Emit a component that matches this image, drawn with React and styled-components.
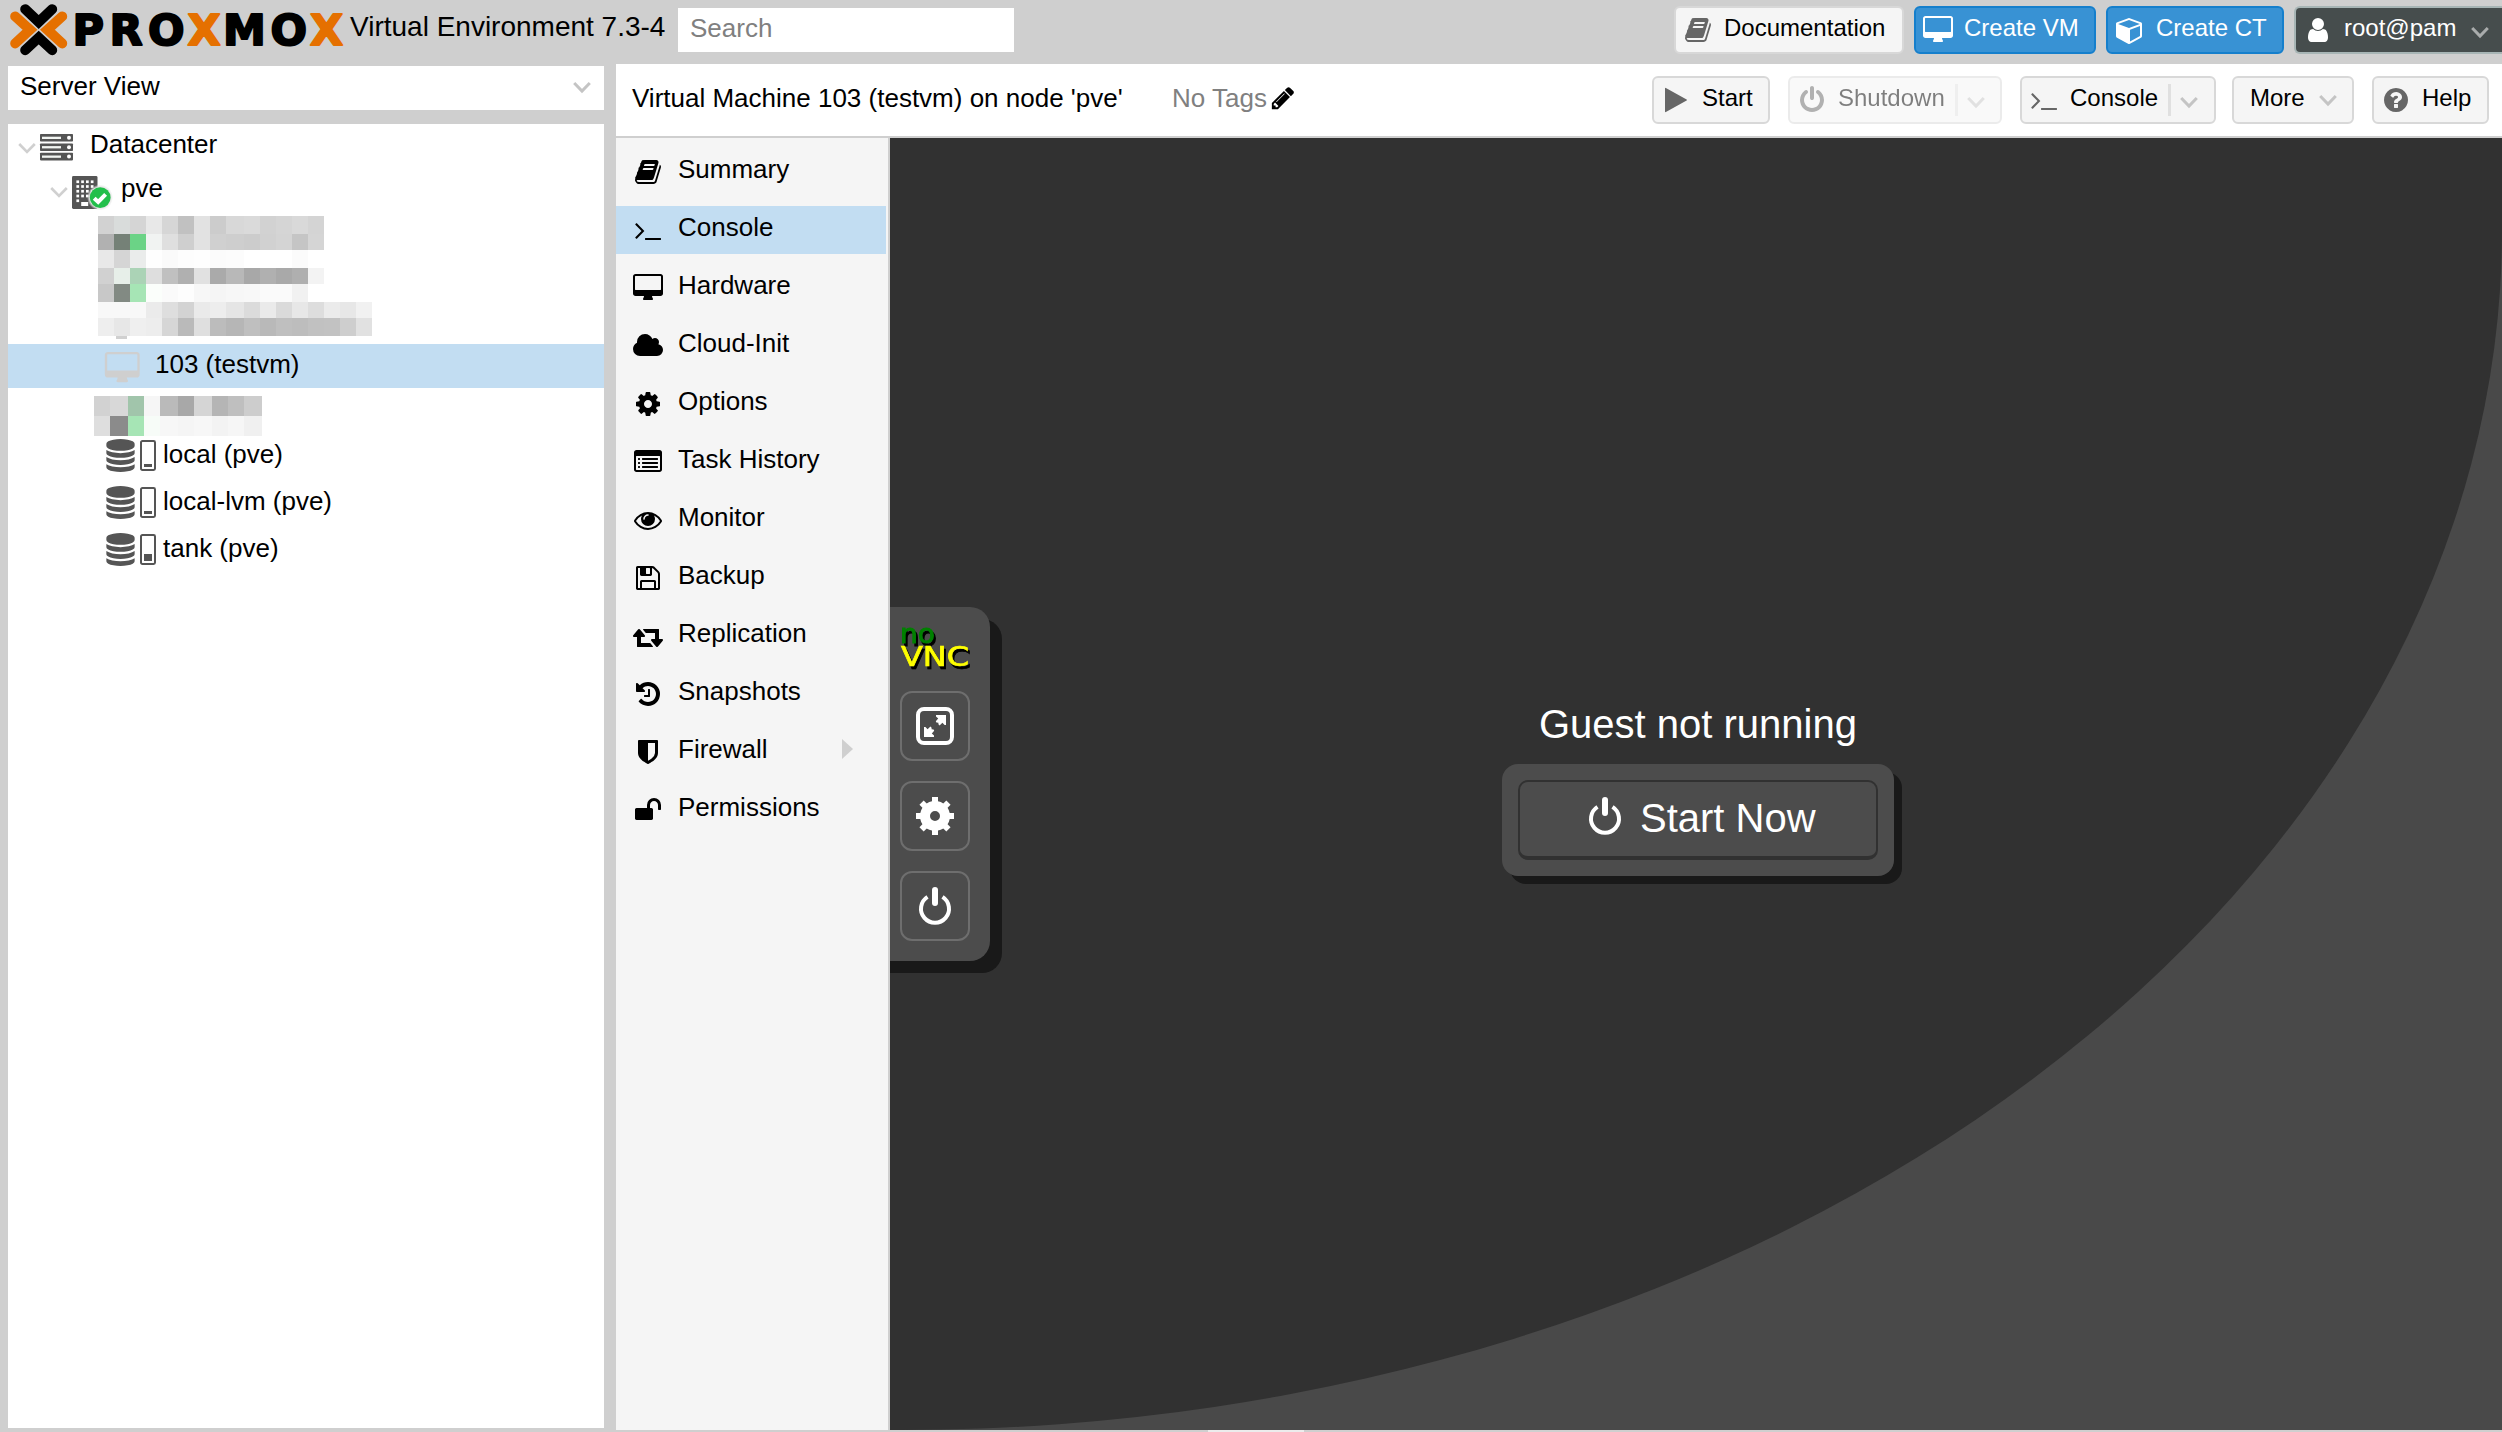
import React from 'react';
import styled, { createGlobalStyle, css } from 'styled-components';

const GlobalStyle = createGlobalStyle`
  * { box-sizing: border-box; }
  html, body, #root { height: 100%; }
  body {
    margin: 0;
    overflow: hidden;
    background: #cfcfcf;
    color: #000;
    font-family: "Liberation Sans", Arial, Helvetica, sans-serif;
    font-size: 26px;
  }
`;

/* ---------- icons ---------- */

const ICONS = {
  book: 'M1703 478q40 57 18 129l-275 906q-19 64-76.5 107.5t-122.5 43.5h-923q-77 0-148.5-53.5t-99.5-131.5q-24-67-2-127 0-4 3-27t4-37q1-8-3-21.5t-3-19.5q2-11 8-21t16.5-23.5 16.5-23.5q23-38 45-91.5t30-91.5q3-10 .5-30t-.5-28q3-11 17-28t17-23q21-36 42-92t25-90q1-9-2.5-32t.5-28q4-13 22-30.5t22-22.5q19-26 42.5-84.5t27.5-96.5q1-8-3-25.5t-2-26.5q2-8 9-18t18-23 17-21q8-12 16.5-30.5t15-35 16-36 19.5-32 26.5-23.5 36-11.5 47.5 5.5l-1 3q38-9 51-9h761q74 0 114 56t18 130l-274 906q-36 119-71.5 153.5t-128.5 34.5h-869q-27 0-38 15-11 16-1 43 24 70 144 70h923q29 0 56-15.5t35-41.5l300-987q7-22 5-57 38 15 59 43zm-1064 2q-4 13 2 22.5t20 9.5h608q13 0 25.5-9.5t16.5-22.5l21-64q4-13-2-22.5t-20-9.5h-608q-13 0-25.5 9.5t-16.5 22.5zm-83 256q-4 13 2 22.5t20 9.5h608q13 0 25.5-9.5t16.5-22.5l21-64q4-13-2-22.5t-20-9.5h-608q-13 0-25.5 9.5t-16.5 22.5z',
  terminal: 'M649 983l-466 466q-10 10-23 10t-23-10l-50-50q-10-10-10-23t10-23l393-393-393-393q-10-10-10-23t10-23l50-50q10-10 23-10t23 10l466 466q10 10 10 23t-10 23zm1079 457v64q0 14-9 23t-23 9h-960q-14 0-23-9t-9-23v-64q0-14 9-23t23-9h960q14 0 23 9t9 23z',
  desktop: 'M1728 992v-832q0-13-9.5-22.5t-22.5-9.5h-1600q-13 0-22.5 9.5t-9.5 22.5v832q0 13 9.5 22.5t22.5 9.5h1600q13 0 22.5-9.5t9.5-22.5zm128-832v1088q0 66-47 113t-113 47h-544q0 37 16 77.5t32 71 16 43.5q0 26-19 45t-45 19h-512q-26 0-45-19t-19-45q0-14 16-44t32-70 16-78h-544q-66 0-113-47t-47-113v-1088q0-66 47-113t113-47h1600q66 0 113 47t47 113z',
  cloud: 'M1856 1152q0 159-112.5 271.5t-271.5 112.5h-1088q-185 0-316.5-131.5t-131.5-316.5q0-132 71-241.5t187-163.5q-2-28-2-43 0-212 150-362t362-150q158 0 286.5 88t187.5 230q70-62 166-62 106 0 181 75t75 181q0 75-41 138 129 30 213 134.5t84 239.5z',
  cog: 'M1152 896q0-106-75-181t-181-75-181 75-75 181 75 181 181 75 181-75 75-181zm512-109v222q0 12-8 23t-20 13l-185 28q-19 54-39 91 35 50 107 138 10 12 10 25t-9 23q-27 37-99 108t-94 71q-12 0-26-9l-138-108q-44 23-91 38-16 136-29 186-7 28-36 28h-222q-14 0-24.5-8.5t-11.5-21.5l-28-184q-49-16-90-37l-141 107q-10 9-25 9-14 0-25-11-126-114-165-168-7-10-7-23 0-12 8-23 15-21 51-66.5t54-70.5q-27-50-41-99l-183-27q-13-2-21-12.5t-8-23.5v-222q0-12 8-23t19-13l186-28q14-46 39-92-40-57-107-138-10-12-10-24 0-10 9-23 26-36 98.5-107.5t94.5-71.5q13 0 26 10l138 107q44-23 91-38 16-136 29-186 7-28 36-28h222q14 0 24.5 8.5t11.5 21.5l28 184q49 16 90 37l142-107q9-9 24-9 13 0 25 10 129 119 165 170 7 8 7 22 0 12-8 23-15 21-51 66.5t-54 70.5q26 50 41 98l183 28q13 2 21 12.5t8 23.5z',
  list: 'M384 1184v64q0 13-9.5 22.5t-22.5 9.5h-64q-13 0-22.5-9.5t-9.5-22.5v-64q0-13 9.5-22.5t22.5-9.5h64q13 0 22.5 9.5t9.5 22.5zm0-256v64q0 13-9.5 22.5t-22.5 9.5h-64q-13 0-22.5-9.5t-9.5-22.5v-64q0-13 9.5-22.5t22.5-9.5h64q13 0 22.5 9.5t9.5 22.5zm0-256v64q0 13-9.5 22.5t-22.5 9.5h-64q-13 0-22.5-9.5t-9.5-22.5v-64q0-13 9.5-22.5t22.5-9.5h64q13 0 22.5 9.5t9.5 22.5zm1152 512v64q0 13-9.5 22.5t-22.5 9.5h-960q-13 0-22.5-9.5t-9.5-22.5v-64q0-13 9.5-22.5t22.5-9.5h960q13 0 22.5 9.5t9.5 22.5zm0-256v64q0 13-9.5 22.5t-22.5 9.5h-960q-13 0-22.5-9.5t-9.5-22.5v-64q0-13 9.5-22.5t22.5-9.5h960q13 0 22.5 9.5t9.5 22.5zm0-256v64q0 13-9.5 22.5t-22.5 9.5h-960q-13 0-22.5-9.5t-9.5-22.5v-64q0-13 9.5-22.5t22.5-9.5h960q13 0 22.5 9.5t9.5 22.5zm128 704v-832q0-13-9.5-22.5t-22.5-9.5h-1472q-13 0-22.5 9.5t-9.5 22.5v832q0 13 9.5 22.5t22.5 9.5h1472q13 0 22.5-9.5t9.5-22.5zm128-1088v1088q0 66-47 113t-113 47h-1472q-66 0-113-47t-47-113v-1088q0-66 47-113t113-47h1472q66 0 113 47t47 113z',
  eye: 'M1664 960q-152-236-381-353 61 104 61 225 0 185-131.5 316.5t-316.5 131.5-316.5-131.5-131.5-316.5q0-121 61-225-229 117-381 353 133 205 333.5 326.5t434.5 121.5 434.5-121.5 333.5-326.5zm-720-384q0-20-14-34t-34-14q-125 0-214.5 89.5t-89.5 214.5q0 20 14 34t34 14 34-14 14-34q0-86 61-147t147-61q20 0 34-14t14-34zm848 384q0 34-20 69-140 230-376.5 368.5t-499.5 138.5-499.5-139-376.5-368q-20-35-20-69t20-69q140-229 376.5-368t499.5-139 499.5 139 376.5 368q20 35 20 69z',
  floppy: 'M512 1536h768v-384h-768v384zm896 0h128v-896q0-14-10-38.5t-20-34.5l-281-281q-10-10-34-20t-39-10v416q0 40-28 68t-68 28h-576q-40 0-68-28t-28-68v-416h-128v1280h128v-416q0-40 28-68t68-28h832q40 0 68 28t28 68v416zm-384-928v-320q0-13-9.5-22.5t-22.5-9.5h-192q-13 0-22.5 9.5t-9.5 22.5v320q0 13 9.5 22.5t22.5 9.5h192q13 0 22.5-9.5t9.5-22.5zm640 32v928q0 40-28 68t-68 28h-1344q-40 0-68-28t-28-68v-1344q0-40 28-68t68-28h928q40 0 88 20t76 48l280 280q28 28 48 76t20 88z',
  retweet: 'M1216 1568q0 13-9.5 22.5t-22.5 9.5h-960q-8 0-13.5-2t-9-7-5.5-8-3-11.5-1-11.5v-600h-192q-26 0-45-19t-19-45q0-24 15-41l320-384q19-22 49-22t49 22l320 384q15 17 15 41 0 26-19 45t-45 19h-192v384h576q16 0 25 11l160 192q7 10 7 21zm640-416q0 24-15 41l-320 384q-20 23-49 23t-49-23l-320-384q-15-17-15-41 0-26 19-45t45-19h192v-384h-576q-16 0-25-12l-160-192q-7-9-7-20 0-13 9.5-22.5t22.5-9.5h960q8 0 13.5 2t9 7 5.5 8 3 11.5 1 11.5v600h192q26 0 45 19t19 45z',
  history: 'M1664 896q0 156-61 298t-164 245-245 164-298 61q-172 0-327-72.5t-264-204.5q-7-10-6.5-22.5t8.5-20.5l137-138q10-9 25-9 16 2 23 12 73 95 179 147t225 52q104 0 198.5-40.5t163.5-109.5 109.5-163.5 40.5-198.5-40.5-198.5-109.5-163.5-163.5-109.5-198.5-40.5q-98 0-188 35.5t-160 101.5l137 138q31 30 14 69-17 40-59 40h-448q-26 0-45-19t-19-45v-448q0-42 40-59 39-17 69 14l130 129q107-101 244.5-156.5t284.5-55.5q156 0 298 61t245 164 164 245 61 298zm-640-288v448q0 14-9 23t-23 9h-320q-14 0-23-9t-9-23v-64q0-14 9-23t23-9h224v-352q0-14 9-23t23-9h64q14 0 23 9t9 23z',
  shield: 'M1344 960v-640h-448v1137q119-63 213-137 235-184 235-360zm192-768v768q0 86-33.5 170.5t-83 150-118 127.5-126.5 103-121 77.5-89.5 49.5-42.5 20q-12 6-26 6t-26-6q-16-7-42.5-20t-89.5-49.5-121-77.5-126.5-103-118-127.5-83-150-33.5-170.5v-768q0-26 19-45t45-19h1152q26 0 45 19t19 45z',
  unlock: 'M1728 576v256q0 26-19 45t-45 19h-64q-26 0-45-19t-19-45v-256q0-106-75-181t-181-75-181 75-75 181v192h96q40 0 68 28t28 68v576q0 40-28 68t-68 28h-960q-40 0-68-28t-28-68v-576q0-40 28-68t68-28h672v-192q0-185 131.5-316.5t316.5-131.5 316.5 131.5 131.5 316.5z',
  play: 'M1576 927l-1328 738q-23 13-39.5 3t-16.5-36v-1472q0-26 16.5-36t39.5 3l1328 738q23 13 23 31t-23 31z',
  power: 'M1664 896q0 156-61 298t-164 245-245 164-298 61-298-61-245-164-164-245-61-298q0-182 80.5-343t226.5-270q43-32 95.5-25t83.5 50q32 42 24.5 94.5t-49.5 84.5q-98 74-151.5 181t-53.5 228q0 104 40.5 198.5t109.5 163.5 163.5 109.5 198.5 40.5 198.5-40.5 163.5-109.5 109.5-163.5 40.5-198.5q0-121-53.5-228t-151.5-181q-42-32-49.5-84.5t24.5-94.5q31-43 84-50t95 25q146 109 226.5 270t80.5 343zm-640-768v640q0 52-38 90t-90 38-90-38-38-90v-640q0-52 38-90t90-38 90 38 38 90z',
  question: 'M1024 1376v-192q0-14-9-23t-23-9h-192q-14 0-23 9t-9 23v192q0 14 9 23t23 9h192q14 0 23-9t9-23zm256-672q0-88-55.5-163t-138.5-116-170-41q-243 0-371 213-15 24 8 42l132 100q7 6 19 6 16 0 25-12 53-68 86-92 34-24 86-24 48 0 85.5 26t37.5 59q0 38-20 61t-68 45q-63 28-115.5 86.5t-52.5 125.5v36q0 14 9 23t23 9h192q14 0 23-9t9-23q0-19 21.5-49.5t54.5-49.5q32-18 49-28.5t46-35 44.5-48 28-60.5 12.5-81zm384 192q0 209-103 385.5t-279.5 279.5-385.5 103-385.5-103-279.5-279.5-103-385.5 103-385.5 279.5-279.5 385.5-103 385.5 103 279.5 279.5 103 385.5z',
  pencil: 'M491 1536l91-91-235-235-91 91v107h128v128h107zm523-928q0-22-22-22-10 0-17 7l-542 542q-7 7-7 17 0 22 22 22 10 0 17-7l542-542q7-7 7-17zm-54-192l416 416-832 832h-416v-416zm683 96q0 53-37 90l-166 166-416-416 166-165q36-38 90-38 53 0 91 38l235 234q37 39 37 91z',
  user: 'M1536 1399q0 109-62.5 187t-150.5 78h-854q-88 0-150.5-78t-62.5-187q0-85 8.5-160.5t31.5-152 58.5-131 94-89 134.5-34.5q131 128 313 128t313-128q76 0 134.5 34.5t94 89 58.5 131 31.5 152 8.5 160.5zm-256-887q0 159-112.5 271.5t-271.5 112.5-271.5-112.5-112.5-271.5 112.5-271.5 271.5-112.5 271.5 112.5 112.5 271.5z',
  cube: 'M896 1629l640-349v-636l-640 233v752zm-64-865l698-254-698-254-698 254zm832-252v768q0 35-18 65t-49 47l-704 384q-28 16-61 16t-61-16l-704-384q-31-17-49-47t-18-65v-768q0-40 23-73t61-47l704-256q22-8 44-8t44 8l704 256q38 14 61 47t23 73z',
  database: 'M896 768q237 0 443-43t325-127v170q0 69-103 128t-280 93.5-385 34.5-385-34.5-280-93.5-103-128v-170q119 84 325 127t443 43zm0 768q237 0 443-43t325-127v170q0 69-103 128t-280 93.5-385 34.5-385-34.5-280-93.5-103-128v-170q119 84 325 127t443 43zm0-384q237 0 443-43t325-127v170q0 69-103 128t-280 93.5-385 34.5-385-34.5-280-93.5-103-128v-170q119 84 325 127t443 43zm0-1152q208 0 385 34.5t280 93.5 103 128v128q0 69-103 128t-280 93.5-385 34.5-385-34.5-280-93.5-103-128v-128q0-69 103-128t280-93.5 385-34.5z',
};

const Glyph = styled.svg`
  display: block;
  flex: none;
  overflow: visible;
  fill: currentColor;
  width: ${(p) => p.$size}px;
  height: ${(p) => p.$size}px;
`;

function Icon({ name, size = 28 }) {
  return (
    <Glyph $size={size} viewBox="0 0 1792 1792" aria-hidden="true">
      <path d={ICONS[name]} />
    </Glyph>
  );
}

const ChevronSvg = styled.svg`
  display: block;
  flex: none;
  width: 18px;
  height: 11px;
  overflow: visible;
  margin-top: ${(p) => p.$top || 0}px;
  fill: none;
  stroke: ${(p) => p.$color || '#c4c4c4'};
  stroke-width: ${(p) => p.$weight || 3};
`;

function Chevron(props) {
  return (
    <ChevronSvg viewBox="0 0 18 11" {...props}>
      <path d="M1.2 1 L9 9 L16.8 1" />
    </ChevronSvg>
  );
}

/* ---------- frame ---------- */

const Page = styled.div`
  display: flex;
  flex-direction: column;
  width: 100%;
  height: 1432px;
  overflow: hidden;
  background: #cfcfcf;
`;

const Header = styled.header`
  flex: none;
  display: flex;
  align-items: flex-start;
  height: 64px;
  padding: 6px 0 0 10px;
`;

const Logo = styled.svg`
  flex: none;
  display: block;
  width: 336px;
  height: 52px;
  margin-top: -2px;
`;

const Version = styled.div`
  width: 332px;
  padding-left: 4px;
  font-size: 28px;
  line-height: 42px;
  white-space: nowrap;
`;

const SearchBox = styled.div`
  width: 336px;
  height: 44px;
  margin-top: 2px;
  padding-left: 12px;
  background: #fff;
  color: #808080;
  line-height: 41px;
`;

const HeaderActions = styled.div`
  display: flex;
  gap: 10px;
  margin-left: auto;
`;

const tones = {
  plain: css`background: #f5f5f5; border-color: #d8d8d8; color: #000;`,
  blue: css`background: #3892d4; border-color: #157fcc; color: #fff;`,
  dark: css`background: #464d4d; border-color: #a7b5b5; color: #fff; border-right: 0; border-radius: 6px 0 0 6px;`,
};

const ButtonBox = styled.button`
  flex: none;
  display: flex;
  align-items: flex-start;
  width: ${(p) => p.$width}px;
  height: 48px;
  padding: 0 0 0 ${(p) => p.$pad || 8}px;
  margin: 0 ${(p) => p.$shift || 0}px 0 0;
  border: 2px solid;
  border-radius: 6px;
  font-family: inherit;
  font-size: 24px;
  text-align: left;
  white-space: nowrap;
  ${(p) => tones[p.$tone || 'plain']}
  opacity: ${(p) => (p.$disabled ? 0.5 : 1)};
`;

const ButtonIcon = styled.span`
  width: 40px;
  padding-top: 8px;
  color: ${(p) => (p.$plain ? '#666' : '#fff')};
`;

const ButtonLabel = styled.span`
  line-height: 40px;
`;

const Divider = styled.span`
  width: 3px;
  height: 32px;
  margin: 6px 9px 0 10px;
  background: #e0e0e0;
`;

const ArrowSlot = styled.span`
  padding: ${(p) => p.$top || 19}px 0 0 ${(p) => p.$gap || 0}px;
`;

function ToolButton({ icon, label, tone = 'plain', split, arrow, arrowGap, arrowTop, ...box }) {
  return (
    <ButtonBox $tone={tone} {...box}>
      {icon && <ButtonIcon $plain={tone === 'plain'}><Icon name={icon} /></ButtonIcon>}
      <ButtonLabel>{label}</ButtonLabel>
      {split && <Divider />}
      {(split || arrow) && (
        <ArrowSlot $gap={arrowGap} $top={arrowTop}>
          <Chevron $color={tone === 'dark' ? '#a9acac' : '#c4c4c4'} />
        </ArrowSlot>
      )}
    </ButtonBox>
  );
}

const Body = styled.div`
  flex: none;
  display: grid;
  grid-template-columns: 596px 1fr;
  column-gap: 12px;
  height: 1366px;
  padding-left: 8px;
`;

/* ---------- resource tree ---------- */

const Sidebar = styled.aside`
  display: flex;
  flex-direction: column;
  gap: 14px;
  padding: 2px 0;
`;

const ViewSelect = styled.div`
  flex: none;
  display: flex;
  justify-content: space-between;
  height: 44px;
  padding: 0 13px 0 12px;
  background: #fff;
  line-height: 41px;
`;

const Tree = styled.div`
  flex: 1;
  background: #fff;
`;

const TreeRow = styled.div`
  display: flex;
  align-items: flex-start;
  height: ${(p) => p.$height || 44}px;
  padding-left: ${(p) => p.$indent}px;
  background: ${(p) => (p.$selected ? '#c2ddf2' : 'transparent')};
  line-height: ${(p) => (p.$height ? 44 : 40)}px;
  white-space: nowrap;
`;

const Expander = styled.span`
  width: 22px;
  padding-top: 19px;
`;

const NodeIcon = styled.span`
  width: ${(p) => p.$width}px;
  padding-top: ${(p) => p.$top}px;
  color: ${(p) => p.$color || '#555'};
`;

const Art = styled.svg`
  display: block;
  overflow: visible;
`;

function ServerIcon() {
  return (
    <Art width="33" height="27" viewBox="0 0 33 27">
      {[0, 9.4, 18.8].map((y) => (
        <g key={y}>
          <rect x="0" y={y} width="33" height="7.6" rx="0.8" fill="#555" />
          <rect x="2" y={y + 2.7} width="19" height="2.3" fill="#f2f5f2" />
          <circle cx="29" cy={y + 3.8} r="2" fill="#fff" />
        </g>
      ))}
    </Art>
  );
}

function NodeOnlineIcon() {
  const dots = [];
  for (let r = 0; r < 5; r += 1) {
    for (let c = 0; c < 4; c += 1) {
      if (r < 4 || c === 0) dots.push([4.4 + c * 4.8, 4.4 + r * 4.75]);
    }
  }
  return (
    <Art width="39" height="33" viewBox="0 0 39 33">
      <defs>
        <radialGradient id="halo">
          <stop offset="0.8" stopColor="#e4e4e4" />
          <stop offset="1" stopColor="#e4e4e4" stopOpacity="0" />
        </radialGradient>
      </defs>
      <rect x="0" y="0" width="25.5" height="33" rx="1.4" fill="#555" />
      {dots.map(([x, y]) => (
        <rect key={`${x}-${y}`} x={x} y={y} width="2.7" height="2.7" fill="#fff" />
      ))}
      <rect x="9.2" y="26" width="7" height="4" fill="#fff" />
      <circle cx="28" cy="21.5" r="13" fill="url(#halo)" />
      <circle cx="28.2" cy="21.6" r="10.4" fill="#22bf4b" />
      <path d="M22.2 22.2 L26.2 26 L33.6 18.4" fill="none" stroke="#fff" strokeWidth="4" />
    </Art>
  );
}

function UsageIcon({ fill }) {
  return (
    <Art width="16" height="31" viewBox="0 0 16 31">
      <rect x="1" y="1" width="14" height="29" rx="1.4" fill="#fff" stroke="#555" strokeWidth="2" />
      <rect x="4" y={27 - fill} width="8" height={fill} fill="#555" />
    </Art>
  );
}

const MosaicRow = styled.div`
  display: flex;
  height: ${(p) => p.$height}px;
  padding-left: ${(p) => p.$indent}px;
`;

const MosaicGroup = styled.div`
  height: ${(p) => p.$height}px;
  padding-top: ${(p) => p.$top}px;
`;

const Cell = styled.span`
  flex: none;
  width: ${(p) => p.$width}px;
  background: ${(p) => p.$color};
`;

const MonitorFoot = styled.div`
  width: 11px;
  height: 3px;
  margin-left: 108px;
  background: #d0d0d0;
`;

const MASK_A = {
  indent: 90,
  widths: [16, 16, 16, 16, 16, 16, 16, 16, 18, 16, 16, 16, 16, 16, 16, 16, 16],
  rows: [
    [18, '#d2d2d2 #d9dcdb #d5d5d5 #e8e8e8 #d6d6d6 #c1c1c1 #e2e2e2 #cccccc #d8d8d8 #dadada #d2d2d2 #d5d5d5 #d9d9d9 #d4d4d4'],
    [16, '#b1b1b1 #758177 #6bd386 #f1f3f2 #dfdfdf #cfcfcf #e2e2e2 #d0d0d0 #cecece #cccccc #d1d1d1 #d4d4d4 #c5c5c5 #d5d5d5'],
    [18, '#e8e8e8 #d5d5d5 #eaeceb #fefefe #fafafa #fdfdfd #fefefe #fbfbfb #fcfcfc #ffffff #ffffff #ffffff #fbfbfb #ffffff'],
    [16, '#d1d1d1 #e7efe9 #abd3b6 #dedede #c0c0c0 #b0b0b0 #e1e1e1 #aaaaaa #b8b8b8 #a8a8a8 #b0b0b0 #a9a9a9 #afafaf #f3f3f3'],
    [18, '#c8c8c8 #828a83 #a6e5b5 #fbfefb #fafafa #fdfdfd #f7f7f7 #f5f5f5 #f7f7f7 #f8f8f8 #fafafa #fafafa #f1f1f1 #ffffff'],
    [16, '#f8f8f8 #f8f8f8 #f8f8f8 #ebebeb #dedede #d3d3d3 #eaeaea #ededed #e5e5e5 #dbdbdb #eaeaea #dadada #e7e7e7 #dddddd #ebebeb #e7e7e7 #f1f1f1'],
    [18, '#eeeeee #e7e7e7 #efefef #ededed #d6d6d6 #bababa #dfdfdf #bcbcbc #b6b6b6 #bfbfbf #b9b9b9 #bfbfbf #bdbdbd #c1c1c1 #c2c2c2 #cecece #e1e1e1'],
  ],
};

const MASK_B = {
  indent: 86,
  widths: [16, 18, 16, 16, 18, 16, 18, 16, 16, 18],
  rows: [
    [20, '#d2d2d2 #d8d8d8 #a1c5ab #f6f6f6 #bababa #a8a8a8 #d5d5d5 #b5b5b5 #bfbfbf #cdcdcd'],
    [20, '#dedede #8b8b8b #a6e5b5 #f7fcf8 #f7f7f7 #f5f5f5 #f7f7f7 #f3f3f3 #f6f6f6 #f0f0f0'],
  ],
};

function Mosaic({ mask, height, top, children }) {
  return (
    <MosaicGroup $height={height} $top={top}>
      {mask.rows.map(([h, colors], r) => (
        <MosaicRow key={r} $height={h} $indent={mask.indent}>
          {colors.split(' ').map((c, i) => (
            <Cell key={i} $width={mask.widths[i]} $color={c} />
          ))}
        </MosaicRow>
      ))}
      {children}
    </MosaicGroup>
  );
}

const STORAGES = [
  { name: 'local (pve)', fill: 3 },
  { name: 'local-lvm (pve)', fill: 3 },
  { name: 'tank (pve)', fill: 7 },
];

/* ---------- content ---------- */

const Content = styled.main`
  display: flex;
  flex-direction: column;
  min-width: 0;
`;

const TitleBar = styled.div`
  flex: none;
  display: flex;
  align-items: flex-start;
  height: 74px;
  padding: 12px 13px 0 16px;
  background: #fff;
  border-bottom: 2px solid #cfcfcf;
  line-height: 44px;
  white-space: nowrap;
`;

const Title = styled.div`
  width: 540px;
`;

const Tags = styled.div`
  display: flex;
  color: #808080;
`;

const EditTags = styled.span`
  padding: 9px 0 0 3px;
  color: #000;
`;

const Toolbar = styled.div`
  display: flex;
  gap: 18px;
  margin-left: auto;
  line-height: 40px;
`;

const Workspace = styled.div`
  flex: 1;
  display: grid;
  grid-template-columns: 274px 1fr;
  min-height: 0;
`;

const Menu = styled.nav`
  display: flex;
  flex-direction: column;
  gap: 10px;
  padding: 10px 2px 0 0;
  background: #f5f5f5;
  border-right: 2px solid #cfcfcf;
`;

const MenuItem = styled.div`
  display: flex;
  align-items: flex-start;
  height: 48px;
  padding: 0 34px 0 18px;
  background: ${(p) => (p.$active ? '#c2ddf2' : 'transparent')};
  line-height: 42px;
`;

const MenuIcon = styled.span`
  width: 44px;
  padding-top: 10px;
`;

const SubmenuArrow = styled.span`
  margin: 11px -1px 0 auto;
  border-left: 11px solid #cfcfcf;
  border-top: 10px solid transparent;
  border-bottom: 10px solid transparent;
`;

const MENU = [
  ['book', 'Summary'],
  ['terminal', 'Console'],
  ['desktop', 'Hardware'],
  ['cloud', 'Cloud-Init'],
  ['cog', 'Options'],
  ['list', 'Task History'],
  ['eye', 'Monitor'],
  ['floppy', 'Backup'],
  ['retweet', 'Replication'],
  ['history', 'Snapshots'],
  ['shield', 'Firewall'],
  ['unlock', 'Permissions'],
];

const ConsoleFrame = styled.div`
  background: #494949;
  overflow: hidden;
`;

const Screen = styled.div`
  display: flex;
  height: 100%;
  background: #313131;
  border-bottom-right-radius: 1600px 1200px;
`;

const ControlBar = styled.div`
  flex: none;
  align-self: center;
  display: flex;
  flex-direction: column;
  gap: 20px;
  width: 100px;
  height: 354px;
  padding: 18px 0 0 10px;
  background: #4c4c4c;
  border-radius: 0 20px 20px 0;
  box-shadow: 12px 12px 0 #191919, 0 12px 0 #191919;
`;

const VncLogo = styled.svg`
  display: block;
  width: 74px;
  height: 46px;
  overflow: visible;
  font-family: "DejaVu Sans", sans-serif;
  filter: drop-shadow(2px 3px 0 #000);
`;

const ControlButton = styled.button`
  display: flex;
  align-items: center;
  justify-content: center;
  width: 70px;
  height: 70px;
  padding: 0;
  border: 2px solid #6e6e6e;
  border-radius: 12px;
  background: transparent;
`;

const Dialog = styled.div`
  flex: 1;
  display: flex;
  flex-direction: column;
  align-items: center;
  gap: 17px;
  padding: 563px 96px 0 0;
`;

const DialogText = styled.div`
  color: #fff;
  font-size: 40px;
  line-height: 46px;
`;

const DialogBox = styled.div`
  width: 392px;
  height: 112px;
  padding: 16px;
  background: #4c4c4c;
  border-radius: 16px;
  box-shadow: 8px 8px 0 #191919;
`;

const StartButton = styled.button`
  display: flex;
  align-items: flex-start;
  gap: 16px;
  width: 360px;
  height: 80px;
  padding: 15px 0 0 66px;
  border: 2px solid #313131;
  border-bottom-width: 4px;
  border-radius: 10px;
  background: transparent;
  color: #fff;
  font-family: inherit;
  font-size: 40px;
  line-height: 43px;
  white-space: nowrap;
`;

const StatusStrip = styled.footer`
  flex: none;
  height: 2px;
  padding-left: 1208px;
`;

const StripHandle = styled.div`
  width: 96px;
  height: 2px;
  background: #ececec;
`;

function PowerSymbol() {
  return (
    <Art width="38" height="38" viewBox="0 0 38 38">
      <path d="M11.5 9.9 A14 14 0 1 0 26.5 9.9" fill="none" stroke="#fff" strokeWidth="4" />
      <rect x="16" y="0" width="6" height="19" rx="3" fill="#fff" />
    </Art>
  );
}

function GearSymbol() {
  return (
    <Art width="38" height="38" viewBox="-19 -19 38 38" fill="#fff">
      <circle r="10" fill="none" stroke="#fff" strokeWidth="10" />
      {[0, 45, 90, 135, 180, 225, 270, 315].map((a) => (
        <rect key={a} x="-3" y="-19" width="6" height="6" transform={`rotate(${a})`} />
      ))}
    </Art>
  );
}

function ExpandSymbol() {
  const arrow = 'M20 8 H30 V18 H28.6 L26.4 15.8 L23.6 18.4 L22.4 17.2 L22.4 15.8 L20.4 15.6 L19.8 14.2 L22.2 11.6 L20 9.4 Z';
  return (
    <Art width="38" height="38" viewBox="0 0 38 38" fill="#fff">
      <rect x="2" y="2" width="34" height="34" rx="6" fill="none" stroke="#fff" strokeWidth="4" />
      <path d={arrow} />
      <path d={arrow} transform="rotate(180 19 19)" />
    </Art>
  );
}

function NoVncLogo() {
  return (
    <VncLogo viewBox="0 0 74 46">
      <text x="0" y="18" fontSize="27" fill="#008000" stroke="#008000" strokeWidth="1" textLength="35" lengthAdjust="spacingAndGlyphs">no</text>
      <text x="1" y="41" fontSize="26" fill="#ffff00" stroke="#ffff00" strokeWidth="0.7" textLength="68" lengthAdjust="spacingAndGlyphs">VNC</text>
    </VncLogo>
  );
}

const LOGO_LETTERS = [
  ['P', 62.5, '#000'],
  ['R', 99.5, '#000'],
  ['O', 138, '#000'],
  ['X', 177.5, '#e57000'],
  ['M', 213, '#000'],
  ['O', 260.5, '#000'],
  ['X', 300, '#e57000'],
];

function ProxmoxLogo() {
  return (
    <Logo viewBox="0 0 336 52" fill="none" strokeLinecap="round">
      <g strokeWidth="10">
        <path d="M5.2 12.4 L20 25.8 L5.2 39.4" stroke="#e57000" />
        <path d="M52.2 12.4 L37.4 25.8 L52.2 39.4" stroke="#e57000" />
        <path d="M15.2 5.2 L28.7 18 L42.2 5.2" stroke="#000" />
        <path d="M15.2 46.2 L28.7 33.6 L42.2 46.2" stroke="#000" />
      </g>
      <text y="41.2" fontFamily="DejaVu Sans, sans-serif" fontWeight="700" fontSize="43" strokeWidth="2" strokeLinejoin="round">
        {LOGO_LETTERS.map(([letter, x, color], i) => (
          <tspan key={i} x={x} fill={color} stroke={color}>{letter}</tspan>
        ))}
      </text>
    </Logo>
  );
}

export default function App() {
  return (
    <Page>
      <GlobalStyle />
      <Header>
        <ProxmoxLogo />
        <Version>Virtual Environment 7.3-4</Version>
        <SearchBox>Search</SearchBox>
        <HeaderActions>
          <ToolButton icon="book" label="Documentation" $width={230} />
          <ToolButton icon="desktop" label="Create VM" tone="blue" $width={182} />
          <ToolButton icon="cube" label="Create CT" tone="blue" $width={178} />
          <ToolButton icon="user" label="root@pam" tone="dark" arrow arrowGap={15} $width={208} />
        </HeaderActions>
      </Header>

      <Body>
        <Sidebar>
          <ViewSelect>
            Server View
            <Chevron $top={16} />
          </ViewSelect>
          <Tree>
            <TreeRow $indent={10}>
              <Expander><Chevron $color="#d0d0d0" $weight={2.6} /></Expander>
              <NodeIcon $width={50} $top={10}><ServerIcon /></NodeIcon>
              Datacenter
            </TreeRow>
            <TreeRow $indent={42}>
              <Expander><Chevron $color="#d0d0d0" $weight={2.6} /></Expander>
              <NodeIcon $width={49} $top={8}><NodeOnlineIcon /></NodeIcon>
              pve
            </TreeRow>
            <Mosaic mask={MASK_A} height={132} top={4}>
              <MonitorFoot />
            </Mosaic>
            <TreeRow $indent={98} $selected>
              <NodeIcon $width={49} $top={8} $color="#cfcfcf"><Icon name="desktop" size={32.5} /></NodeIcon>
              103 (testvm)
            </TreeRow>
            <Mosaic mask={MASK_B} height={44} top={8} />
            {STORAGES.map((s) => (
              <TreeRow key={s.name} $indent={96} $height={47}>
                <NodeIcon $width={36} $top={7}><Icon name="database" size={33} /></NodeIcon>
                <NodeIcon $width={23} $top={8}><UsageIcon fill={s.fill} /></NodeIcon>
                {s.name}
              </TreeRow>
            ))}
          </Tree>
        </Sidebar>

        <Content>
          <TitleBar>
            <Title>Virtual Machine 103 (testvm) on node 'pve'</Title>
            <Tags>
              No Tags
              <EditTags><Icon name="pencil" size={26} /></EditTags>
            </Tags>
            <Toolbar>
              <ToolButton icon="play" label="Start" $width={118} />
              <ToolButton icon="power" label="Shutdown" split $width={214} $disabled />
              <ToolButton icon="terminal" label="Console" split $width={196} $shift={-2} />
              <ToolButton label="More" arrow arrowGap={14} arrowTop={17} $width={122} $pad={16} />
              <ToolButton icon="question" label="Help" $width={117} />
            </Toolbar>
          </TitleBar>
          <Workspace>
            <Menu>
              {MENU.map(([icon, label]) => (
                <MenuItem key={label} $active={label === 'Console'}>
                  <MenuIcon><Icon name={icon} /></MenuIcon>
                  {label}
                  {label === 'Firewall' && <SubmenuArrow />}
                </MenuItem>
              ))}
            </Menu>
            <ConsoleFrame>
              <Screen>
                <ControlBar>
                  <NoVncLogo />
                  <ControlButton><ExpandSymbol /></ControlButton>
                  <ControlButton><GearSymbol /></ControlButton>
                  <ControlButton><PowerSymbol /></ControlButton>
                </ControlBar>
                <Dialog>
                  <DialogText>Guest not running</DialogText>
                  <DialogBox>
                    <StartButton>
                      <PowerSymbol />
                      Start Now
                    </StartButton>
                  </DialogBox>
                </Dialog>
              </Screen>
            </ConsoleFrame>
          </Workspace>
        </Content>
      </Body>
      <StatusStrip><StripHandle /></StatusStrip>
    </Page>
  );
}
